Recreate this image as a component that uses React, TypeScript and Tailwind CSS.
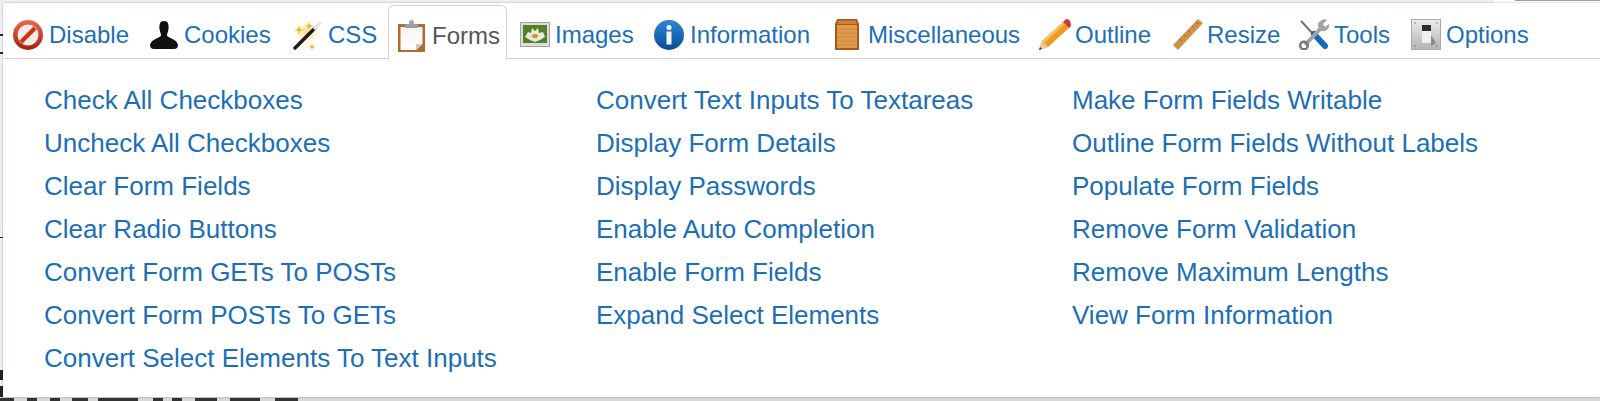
import type { ReactNode } from "react";

const columns = [
  {
    width: "w-[552px]",
    links: [
      "Check All Checkboxes",
      "Uncheck All Checkboxes",
      "Clear Form Fields",
      "Clear Radio Buttons",
      "Convert Form GETs To POSTs",
      "Convert Form POSTs To GETs",
      "Convert Select Elements To Text Inputs",
    ],
  },
  {
    width: "w-[476px]",
    links: [
      "Convert Text Inputs To Textareas",
      "Display Form Details",
      "Display Passwords",
      "Enable Auto Completion",
      "Enable Form Fields",
      "Expand Select Elements",
    ],
  },
  {
    width: "w-[480px]",
    links: [
      "Make Form Fields Writable",
      "Outline Form Fields Without Labels",
      "Populate Form Fields",
      "Remove Form Validation",
      "Remove Maximum Lengths",
      "View Form Information",
    ],
  },
];

function DisableIcon() {
  return (
    <svg viewBox="0 0 30 30" className="h-[30px] w-[30px]">
      <defs>
        <linearGradient id="dis" x1="0" y1="0" x2="0" y2="1">
          <stop offset="0" stopColor="#ea6a52" />
          <stop offset="1" stopColor="#a81d0c" />
        </linearGradient>
      </defs>
      <circle cx="15" cy="15" r="15" fill="url(#dis)" />
      <circle cx="15" cy="15" r="10.5" fill="#f3ebe6" />
      <path d="M6.5 20.5 L20.5 6.5 L23.5 9.5 L9.5 23.5 Z" fill="#cf3118" />
    </svg>
  );
}

function CookiesIcon() {
  return (
    <svg viewBox="0 0 28 28" className="h-[28px] w-[28px]">
      <path
        d="M14 0 C10 0 9 3.5 9.5 8 C10 11 11 12.5 11 14.5 C10 17 1 18 0 24 C0 27 2 28 4 28 L24 28 C26 28 28 27 28 24 C27 18 18 17 17 14.5 C17 12.5 18 11 18.5 8 C19 3.5 18 0 14 0 Z"
        fill="#111"
      />
    </svg>
  );
}

function CssIcon() {
  return (
    <svg viewBox="0 0 29 30" className="h-[30px] w-[29px]">
      <defs>
        <radialGradient id="glow">
          <stop offset="0" stopColor="#fbd777" />
          <stop offset="1" stopColor="#fff6dc" stopOpacity="0" />
        </radialGradient>
      </defs>
      <circle cx="14" cy="13" r="14" fill="url(#glow)" />
      <path d="M2 28 L22 8" stroke="#1c1c1c" strokeWidth="3.5" strokeLinecap="round" />
      <path d="M22 8 L27 3" stroke="#e4e4e4" strokeWidth="3.5" strokeLinecap="round" />
      <path d="M6 5 L7 9 L11 10 L7 11 L6 15 L5 11 L1 10 L5 9 Z" fill="#f5b70f" />
      <path d="M16 2 L17 5 L20 6 L17 7 L16 10 L15 7 L12 6 L15 5 Z" fill="#f5b70f" />
      <path d="M19 24 L20 26 L22 27 L20 28 L19 30 L18 28 L16 27 L18 26 Z" fill="#f5b70f" />
      <path d="M23 16 L23.5 18 L26 18.5 L23.5 19 L23 21 L22.5 19 L20 18.5 L22.5 18 Z" fill="#fff" />
    </svg>
  );
}

function FormsIcon() {
  return (
    <svg viewBox="0 0 27 32" className="h-[32px] w-[27px]">
      <defs>
        <linearGradient id="paper" x1="0" y1="0" x2="0" y2="1">
          <stop offset="0" stopColor="#f4f4f2" />
          <stop offset="1" stopColor="#ffffff" />
        </linearGradient>
      </defs>
      <rect x="0" y="4" width="27" height="28" fill="#b36a2c" />
      <path d="M2.5 7 H24.5 V24 L18 30 H2.5 Z" fill="url(#paper)" />
      <path d="M18 30 L24.5 24 H18 Z" fill="#c9c9c6" />
      <rect x="7" y="4" width="13" height="4" rx="1" fill="#9c9c9c" />
      <circle cx="13.5" cy="2.5" r="2.5" fill="#a8a8a8" />
    </svg>
  );
}

function ImagesIcon() {
  return (
    <svg viewBox="0 0 30 25" className="h-[25px] w-[30px]">
      <rect x="0.5" y="0.5" width="29" height="24" fill="#dcdcd8" stroke="#a5a5a0" />
      <rect x="3" y="3" width="24" height="18" fill="#55802a" />
      <path d="M5 15 L8 10 L11 11 L12 6 L15 9 L18 6 L19 11 L23 10 L25 15 L20 18 L15 20 L10 18 Z" fill="#e6e9de" />
      <ellipse cx="15" cy="14" rx="3" ry="2" fill="#d9902a" />
    </svg>
  );
}

function InformationIcon() {
  return (
    <svg viewBox="0 0 30 30" className="h-[30px] w-[30px]">
      <defs>
        <linearGradient id="info" x1="0" y1="0" x2="0" y2="1">
          <stop offset="0" stopColor="#2d86d6" />
          <stop offset="1" stopColor="#0a4c96" />
        </linearGradient>
      </defs>
      <circle cx="15" cy="15" r="15" fill="url(#info)" />
      <circle cx="15" cy="7.5" r="2.5" fill="#fff" />
      <rect x="12.5" y="11.5" width="5" height="13" fill="#f1f5fa" />
    </svg>
  );
}

function MiscIcon() {
  return (
    <svg viewBox="0 0 24 31" className="h-[31px] w-[24px]">
      <path d="M2 0 H22 L24 5 V31 H0 V5 Z" fill="#a8561c" />
      <path d="M3 1.5 H21 L22 5 H2 Z" fill="#c98238" />
      <rect x="2" y="6" width="20" height="23" fill="#df9a4c" />
      <path d="M2 10 H22 M2 14 H22 M2 18 H22 M2 22 H22 M2 26 H22" stroke="#cf8a3d" />
    </svg>
  );
}

function OutlineIcon() {
  return (
    <svg viewBox="0 0 32 32" className="h-[32px] w-[32px]">
      <path d="M0 31 L3 22 L24 3 L30 9 L9 28 Z" fill="#ef9c1e" />
      <path d="M3 22 L24 3 L26 5 L5 24 Z" fill="#f7c25e" />
      <path d="M0 31 L3 22 L9 28 Z" fill="#e9c9a0" />
      <path d="M0 31 L1 28 L3 30 Z" fill="#333" />
      <path d="M24 3 L27 0 Q30 0 31 2 Q32 4 32 7 L30 9 Z" fill="#c8393a" />
    </svg>
  );
}

function ResizeIcon() {
  return (
    <svg viewBox="0 0 30 31" className="h-[31px] w-[30px]">
      <path d="M0 26 L25 0 L30 4 L5 31 Z" fill="#cf9347" />
      <path d="M7 20 L9 22 M11 16 L13 18 M15 11 L17 13 M19 7 L21 9 M23 3 L25 5" stroke="#9c6c2e" />
    </svg>
  );
}

function ToolsIcon() {
  return (
    <svg viewBox="0 0 30 31" className="h-[31px] w-[30px]">
      <path d="M2 2 L16 17" stroke="#6b7280" strokeWidth="2" />
      <path d="M15 15 L26 27" stroke="#1668b8" strokeWidth="6" strokeLinecap="round" />
      <path d="M6 26 L23 8" stroke="#a2a2a2" strokeWidth="4" />
      <path d="M20 3 Q24 -1 28 1 L24 5 L26 8 L30 5 Q31 10 26 12 Q22 13 20 10 Q18 6 20 3 Z" fill="#a2a2a2" />
      <circle cx="5" cy="26.5" r="3.8" fill="none" stroke="#777" strokeWidth="2.5" />
    </svg>
  );
}

function OptionsIcon() {
  return (
    <svg viewBox="0 0 30 31" className="h-[31px] w-[30px]">
      <defs>
        <linearGradient id="plate" x1="0" y1="0" x2="0" y2="1">
          <stop offset="0" stopColor="#ececea" />
          <stop offset="1" stopColor="#b4b4b2" />
        </linearGradient>
      </defs>
      <rect x="0.5" y="0.5" width="29" height="30" fill="url(#plate)" stroke="#a9a9a7" />
      <rect x="11" y="6" width="9" height="9" fill="#2e2e2e" />
      <rect x="11" y="12" width="9" height="12" fill="#f0f0ee" />
      <path d="M20 16 L25 24 L20 27 Z" fill="#8a8a88" />
      <circle cx="4" cy="4" r="0.8" fill="#777" />
      <circle cx="26" cy="4" r="0.8" fill="#777" />
      <circle cx="4" cy="27" r="0.8" fill="#777" />
      <circle cx="26" cy="27" r="0.8" fill="#777" />
    </svg>
  );
}

function Tab({ icon, label, active, className }: { icon: ReactNode; label: string; active?: boolean; className: string }) {
  return (
    <div
      className={
        active
          ? `mt-[2px] mb-[-1px] flex h-[55px] items-center rounded-t-[6px] border border-b-0 border-[#d4d4d4] bg-white pt-[6px] pl-[9px] text-[#555555] ${className}`
          : `flex h-[55px] items-center pt-[8px] text-[#1c6fb5] ${className}`
      }
    >
      {icon}
      <span>{label}</span>
    </div>
  );
}

export default function App() {
  return (
    <div className="relative h-[401px] w-[1600px] overflow-hidden bg-[#eef0f8] font-['Liberation_Sans',Arial,sans-serif]">
      {/* page behind the toolbar */}
      <div className="absolute top-0 left-[1493px] h-[3px] w-[107px] bg-white" />
      <div className="absolute top-0 left-[1515px] h-[1px] w-[85px] bg-[#9a9a9a]" />
      <div className="absolute top-[34px] left-0 h-[2px] w-[3px] bg-[#222]" />
      <div className="absolute top-[52px] left-0 h-[2px] w-[3px] bg-[#222]" />
      <div className="absolute top-[237px] left-0 h-[1px] w-[3px] bg-[#222]" />
      <div className="absolute top-[370px] left-0 h-[10px] w-[3px] bg-[#222]" />
      <div className="absolute top-[386px] left-0 h-[12px] w-[3px] bg-[#222]" />
      <div className="absolute top-[397px] left-0 h-[4px] w-full bg-[#d8d8d8]" />
      <div className="absolute top-[398px] left-0 flex h-[3px]">
        <div className="w-[14px] bg-[#333]" />
        <div className="ml-[13px] w-[10px] bg-[#333]" />
        <div className="ml-[13px] w-[10px] bg-[#333]" />
        <div className="ml-[12px] w-[16px] bg-[#333]" />
        <div className="ml-[10px] w-[40px] bg-[#333]" />
        <div className="ml-[15px] w-[10px] bg-[#333]" />
        <div className="ml-[9px] w-[10px] bg-[#333]" />
        <div className="ml-[13px] w-[22px] bg-[#333]" />
        <div className="ml-[13px] w-[30px] bg-[#333]" />
        <div className="ml-[15px] w-[23px] bg-[#333]" />
      </div>

      <div className="absolute top-[3px] left-[3px] flex h-[394px] w-[1597px] flex-col bg-white shadow-[0_0_2px_rgba(0,0,0,0.3)]">
        <div className="flex h-[56px] items-start border-b border-[#d4d4d4] pl-[10px] text-[24px]">
          <Tab icon={<DisableIcon />} label="Disable" className="w-[137px] gap-[6px]" />
          <Tab icon={<CookiesIcon />} label="Cookies" className="w-[143px] gap-[6px]" />
          <Tab icon={<CssIcon />} label="CSS" className="w-[95px] gap-[6px]" />
          <Tab icon={<FormsIcon />} label="Forms" active className="w-[119px] gap-[7px]" />
          <Tab icon={<ImagesIcon />} label="Images" className="ml-[13px] w-[134px] gap-[5px]" />
          <Tab icon={<InformationIcon />} label="Information" className="w-[181px] gap-[6px]" />
          <Tab icon={<MiscIcon />} label="Miscellaneous" className="w-[204px] gap-[9px]" />
          <Tab icon={<OutlineIcon />} label="Outline" className="w-[134px] gap-[4px]" />
          <Tab icon={<ResizeIcon />} label="Resize" className="w-[126px] gap-[4px]" />
          <Tab icon={<ToolsIcon />} label="Tools" className="w-[112px] gap-[5px]" />
          <Tab icon={<OptionsIcon />} label="Options" className="gap-[5px]" />
        </div>
        <div className="flex pt-[20px] pl-[41px] text-[26px] text-[#1c6fb5]">
          {columns.map((col) => (
            <ul key={col.links[0]} className={col.width}>
              {col.links.map((link) => (
                <li key={link} className="h-[43px] leading-[43px]">
                  {link}
                </li>
              ))}
            </ul>
          ))}
        </div>
      </div>
    </div>
  );
}
